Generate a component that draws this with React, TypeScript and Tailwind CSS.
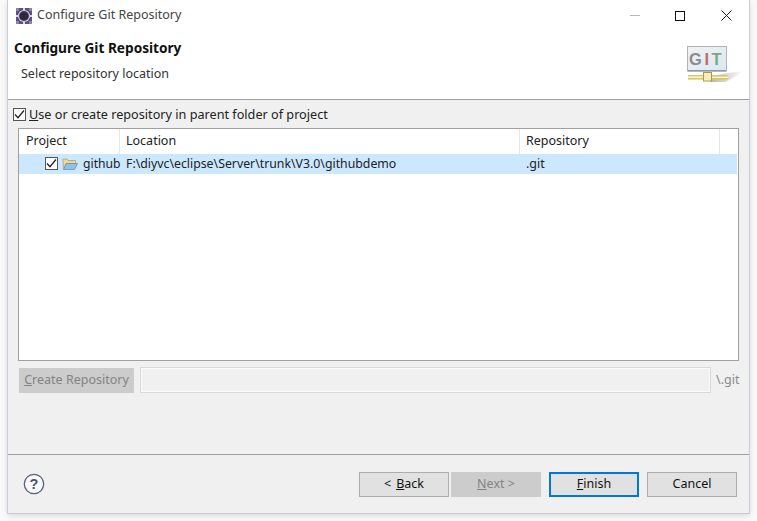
const font = "font-['Noto_Sans',sans-serif]";

function CheckBox() {
  return (
    <span className="flex h-[13px] w-[13px] shrink-0 items-center justify-center border border-[#555] bg-white">
      <svg width="11" height="11" viewBox="0 0 11 11">
        <path d="M1 5.5l3 3.2L10 1.5" fill="none" stroke="#222" strokeWidth="1.3" />
      </svg>
    </span>
  );
}

function GearIcon() {
  return (
    <svg width="16" height="16" viewBox="0 0 16 16" className="shrink-0">
      <rect width="16" height="16" fill="#5d4f7e" />
      <path d="M0 0h3v3H0zM13 0h3v3h-3zM0 13h3v3H0zM13 13h3v3h-3z" fill="#8d83a8" />
      <circle cx="8" cy="8" r="6" fill="#dcd8e8" />
      <circle cx="8" cy="8" r="5" fill="#3a3650" />
      <circle cx="8" cy="8" r="3.6" fill="#2c2a36" />
      <path d="M7 0h2v2H7zM7 14h2v2H7zM0 7h2v2H0zM14 7h2v2h-2z" fill="#dcd8e8" />
    </svg>
  );
}

function GitLogo() {
  return (
    <svg width="62" height="46" viewBox="0 0 62 46">
      <defs>
        <linearGradient id="shade" x1="0" x2="1">
          <stop offset="0" stopColor="#777777" />
          <stop offset="1" stopColor="#ffffff" />
        </linearGradient>
        <linearGradient id="panel" x1="0" x2="1" y1="0" y2="1">
          <stop offset="0" stopColor="#f2f2f2" />
          <stop offset="1" stopColor="#d9e8f2" />
        </linearGradient>
      </defs>
      <path d="M24 36h16l18-11-16 2-16 3z" fill="url(#shade)" opacity="0.55" />
      <rect x="1.5" y="0.5" width="39" height="24.5" fill="url(#panel)" stroke="#b0b2b8" />
      <rect x="2" y="24" width="38" height="1.5" fill="#8f98a8" />
      <rect x="2" y="29" width="40" height="1.6" fill="#d8c860" />
      <rect x="2" y="32" width="40" height="1.6" fill="#d8c860" />
      <rect x="2" y="30.6" width="40" height="1.4" fill="#f7f2cc" />
      <rect x="17.5" y="26.5" width="8" height="8.5" fill="#f8efb8" stroke="#a89b4c" />
      <text x="3" y="19" fontFamily="Liberation Sans, sans-serif" fontWeight="700" fontSize="16.5" fill="#8b8b92">G</text>
      <text x="18.6" y="19" fontFamily="Liberation Sans, sans-serif" fontWeight="700" fontSize="16.5" fill="#c06a6a">I</text>
      <text x="25.5" y="19" fontFamily="Liberation Sans, sans-serif" fontWeight="700" fontSize="16.5" fill="#7ea886">T</text>
    </svg>
  );
}

function FolderIcon() {
  return (
    <svg width="16" height="14" viewBox="0 0 16 14" className="shrink-0">
      <path d="M1 2h4l1 1.5h7.5v3H4L1.5 12z" fill="#f2d98a" stroke="#a8a27c" strokeWidth="0.8" />
      <path d="M4.5 6.5H15.5L12.5 12.5H1.5z" fill="#8fc0ee" stroke="#6f8fb8" strokeWidth="0.8" />
    </svg>
  );
}

function HelpIcon() {
  return (
    <svg width="22" height="22" viewBox="0 0 22 22">
      <circle cx="11" cy="11" r="9.7" fill="#f8f8fb" stroke="#5b5f7e" strokeWidth="1.3" />
      <text x="11" y="16" textAnchor="middle" fontFamily="Liberation Sans, sans-serif" fontWeight="700" fontSize="14.5" fill="#4d5170">?</text>
    </svg>
  );
}

function WizardButton({ children, variant = 'normal', className = '' }: { children: React.ReactNode; variant?: 'normal' | 'disabled' | 'default'; className?: string }) {
  const styles = {
    normal: 'border border-[#adadad] bg-[#e1e1e1] text-[#111]',
    disabled: 'border border-[#cccccc] bg-[#cccccc] text-[#838383]',
    default: 'border-2 border-[#0078d7] bg-[#e1e1e1] text-[#111]',
  };
  return <div className={`flex h-[25px] w-[90px] items-center justify-center text-[12.5px] ${styles[variant]} ${className}`}>{children}</div>;
}

export default function App() {
  return (
    <div className={`h-[521px] w-[757px] overflow-hidden bg-[#fafafa] ${font}`}>
      <div className="ml-[7px] flex h-[514px] w-[743px] flex-col border-x border-b border-x-[#c9cbe0] border-b-[#c3c8de] bg-[#f0f0f0] shadow-[0_2px_6px_rgba(0,0,0,0.12)]">
        {/* title + banner */}
        <div className="h-[100px] shrink-0 border-b border-[#a0a0a0] bg-white">
          <div className="flex h-[31px] items-center pl-[8px] pr-[17px] text-[12.5px] text-[#444]">
            <GearIcon />
            <span className="ml-[5px]">Configure Git Repository</span>
            <span className="ml-auto h-px w-[10px] bg-[#b4b8c4]" />
            <span className="ml-[35px] h-[10px] w-[10px] border border-[#111]" />
            <svg width="11" height="11" viewBox="0 0 11 11" className="ml-[36px]">
              <path d="M0.5 0.5l10 10M10.5 0.5l-10 10" fill="none" stroke="#222" strokeWidth="1" />
            </svg>
          </div>
          <div className="relative">
            <div className="pl-[6px] pt-[8px] text-[13.65px] font-bold leading-[18px] text-[#111]">Configure Git Repository</div>
            <div className="pl-[13px] pt-[8px] text-[12.5px] leading-[17px] text-[#333]">Select repository location</div>
            <div className="absolute right-[1px] top-[15px]">
              <GitLogo />
            </div>
          </div>
        </div>

        {/* body */}
        <div className="flex flex-1 flex-col">
          <div className="flex h-[28px] items-center pl-[5px] text-[12.67px] text-[#222]">
            <CheckBox />
            <span className="ml-[3px]"><u>U</u>se or create repository in parent folder of project</span>
          </div>

          <div className="ml-[10px] h-[233px] w-[721px] border border-[#a0a0a0] bg-white text-[12.5px] text-[#222]">
            <div className="flex h-[25px]">
              <div className="flex w-[101px] items-center border-r border-[#e5e5e5] pl-[7px]">Project</div>
              <div className="flex w-[400px] items-center border-r border-[#e5e5e5] pl-[6px]">Location</div>
              <div className="flex w-[200px] items-center border-r border-[#e5e5e5] pl-[6px]">Repository</div>
            </div>
            <div className="mr-px flex h-[20px] items-center bg-[#cce8ff]">
              <div className="flex w-[101px] items-center pl-[26px]">
                <CheckBox />
                <span className="ml-[4px]"><FolderIcon /></span>
                <span className="ml-[5px] text-[12.2px]">github</span>
              </div>
              <div className="w-[400px] pl-[6px] text-[12.3px]">F:\diyvc\eclipse\Server\trunk\V3.0\githubdemo</div>
              <div className="pl-[6px]">.git</div>
            </div>
          </div>

          <div className="ml-[11px] mt-[6px] flex h-[26px] w-[732px] items-center text-[12.5px]">
            <div className="flex h-[25px] w-[115px] items-center justify-center bg-[#cccccc] text-[#838383]">
              <span><u>C</u>reate Repository</span>
            </div>
            <div className="ml-[6px] h-[26px] w-[571px] border border-[#d9d9d9] bg-[#f0f0f0] shadow-[inset_0_0_0_1px_#fafafa]" />
            <span className="ml-[5px] text-[#8a8a8a]">\.git</span>
          </div>

          <div className="mt-[61px] flex flex-1 items-center border-t border-[#a0a0a0] pl-[15px] pr-[12px]">
            <HelpIcon />
            <div className="ml-auto flex">
              <WizardButton><span>&lt;<span className="ml-[5px]"><u>B</u>ack</span></span></WizardButton>
              <WizardButton variant="disabled" className="ml-[2px]"><span><u>N</u>ext &gt;</span></WizardButton>
              <WizardButton variant="default" className="ml-[8px]"><span><u>F</u>inish</span></WizardButton>
              <WizardButton className="ml-[8px]">Cancel</WizardButton>
            </div>
          </div>
        </div>
      </div>
    </div>
  );
}
